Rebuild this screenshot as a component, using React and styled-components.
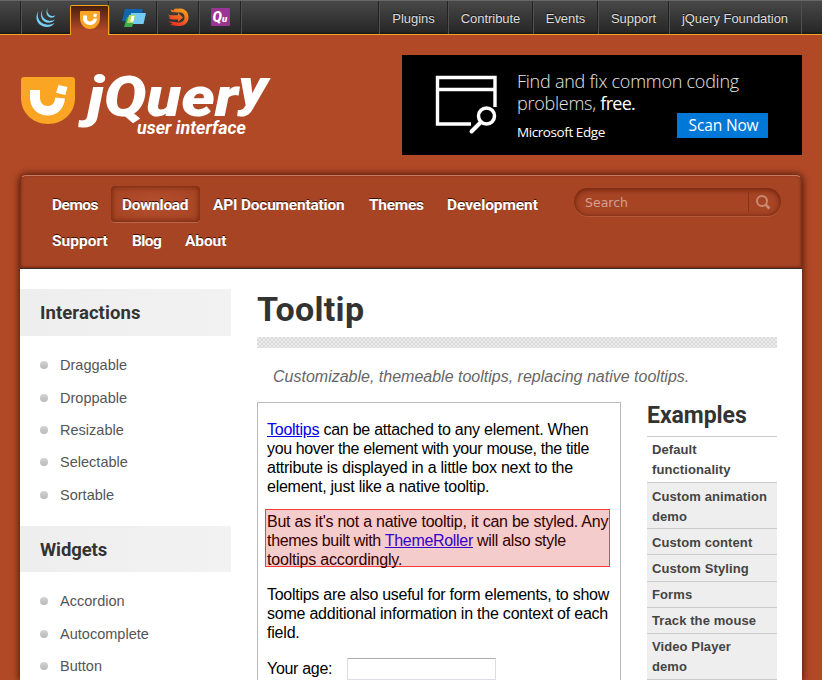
import React from 'react';
import styled, { createGlobalStyle, css } from 'styled-components';

const Global = createGlobalStyle`
  * { box-sizing: border-box; }
  html, body { margin: 0; height: 680px; overflow: hidden; background: #fff; }
  body { font-family: "Liberation Sans", Arial, sans-serif; color: #333; }
  h1, h2, h3, p, ul { margin: 0; padding: 0; font-weight: normal; }
  ul { list-style: none; }
  a { color: inherit; text-decoration: none; }
`;

const Page = styled.div`
  width: 822px;
  height: 680px;
  overflow: hidden;
  background: #b24926;
`;

const TopBar = styled.nav`
  display: flex;
  height: 35px;
  padding-left: 21px;
  border-top: 1px solid #666;
  border-bottom: 1px solid #f9a020;
  background: linear-gradient(#484848, #282828 92%, #161616);
`;

const divider = css`
  border-left: 1px solid #505050;
  box-shadow: -1px 0 0 #222;
`;

const Project = styled.a`
  ${divider}
  width: ${(p) => p.$w}px;
  height: 33px;
  display: flex;
  justify-content: center;
  align-items: flex-start;
`;

const ActiveProject = styled.a`
  width: 39px;
  height: 30px;
  margin-top: 4px;
  display: flex;
  justify-content: center;
  border: 1px solid #f9a020;
  border-bottom: 0;
  border-radius: 2px 2px 0 0;
  background: linear-gradient(#4a2010, #b24926 85%);
  z-index: 1;
`;

const TopLinks = styled.div`
  display: flex;
  margin-left: auto;
  margin-right: 21px;
  box-shadow: 1px 0 0 #505050;
`;

const TopLink = styled.a`
  ${divider}
  width: ${(p) => p.$w}px;
  height: 33px;
  padding-right: 1px;
  line-height: 35px;
  text-align: center;
  font-size: 13px;
  letter-spacing: -0.05px;
  white-space: nowrap;
  color: #ddd;
  text-shadow: 0 -1px 1px #111;
`;

const Header = styled.header`
  display: flex;
  justify-content: space-between;
  height: 120px;
  padding: 20px 20px 0;
`;

const Ad = styled.a`
  display: flex;
  width: 400px;
  height: 100px;
  background: #000;
  color: #fff;
  font-family: "Open Sans", sans-serif;
  white-space: nowrap;
`;

const AdIcon = styled.svg`
  flex: none;
  margin: 20px 0 0 33px;
`;

const AdBody = styled.div`
  display: grid;
  grid-template-columns: 160px 91px;
  grid-template-rows: 22px 22px 25px;
  padding: 15px 0 0 19px;
`;

const AdLine = styled.div`
  grid-column: 1 / 3;
  font-weight: 300;
  font-size: 18px;
  line-height: 22px;
  letter-spacing: -0.25px;
  color: #e6e6e6;
  b { font-weight: 400; color: #fff; letter-spacing: -0.7px; }
`;

const AdBrand = styled.div`
  font-size: 13.5px;
  line-height: 37px;
  letter-spacing: -0.42px;
`;

const AdButton = styled.div`
  height: 25px;
  margin-top: -1px;
  padding-left: 2px;
  background: #0078d7;
  text-align: center;
  font-size: 15.5px;
  line-height: 24px;
  letter-spacing: -0.15px;
`;

const Shell = styled.div`
  width: 782px;
  margin: 20px 20px 0;
  border-radius: 6px 6px 0 0;
  box-shadow: 0 0 7px 1px rgba(40, 8, 0, 0.75);
`;

const NavPanel = styled.div`
  display: flex;
  justify-content: space-between;
  height: 94px;
  padding: 10px 20px 0 20px;
  border: 1px solid #7c301a;
  border-top-color: #cb7a5e;
  border-bottom: 1px solid #3b2a26;
  border-radius: 6px 6px 0 0;
  background: #a74424;
  box-shadow: inset 0 -1px 3px rgba(60, 10, 0, 0.5);
`;

const NavList = styled.ul`
  display: flex;
  flex-wrap: wrap;
  gap: 0 2px;
  width: 515px;
  align-content: flex-start;
`;

const NavItem = styled.li`
  width: ${(p) => p.$w}px;
  height: 36px;
  padding-left: 11px;
  border-radius: 4px;
  font: bold 15.5px/39px Roboto, sans-serif;
  letter-spacing: ${(p) => p.$ls}px;
  white-space: nowrap;
  color: #fff;
  text-shadow: 0 -1px 0 #3a1005;
  ${(p) => p.$active && css`
    background: radial-gradient(ellipse at center, #b4502f, #a74424 80%);
    box-shadow: inset 0 0 5px 1px rgba(80, 20, 0, 0.6), 0 1px 0 #b8674b;
  `}
`;

const SearchBox = styled.form`
  display: flex;
  align-items: center;
  width: 207px;
  height: 28px;
  margin-top: 2px;
  padding-left: 11px;
  border-radius: 14px;
  background: #a74424;
  box-shadow: inset 0 1px 5px 1px rgba(80, 20, 0, 0.65), 0 1px 0 #b35a3c;
`;

const SearchText = styled.span`
  width: 164px;
  height: 20px;
  border-right: 1px solid #87341b;
  font: 12.5px/22px "DejaVu Sans", sans-serif;
  color: #d3a292;
`;

const SearchIcon = styled.svg`
  margin-left: 5px;
`;

const Content = styled.div`
  display: grid;
  grid-template-columns: 211px 520px;
  column-gap: 26px;
  height: 411px;
  overflow: hidden;
  background: #fff;
`;

const Sidebar = styled.aside`
  padding-top: 20px;
`;

const SideHeading = styled.h3`
  height: ${(p) => p.$h}px;
  padding-left: 20px;
  background: linear-gradient(90deg, #eee, #f2f2f2);
  font: bold 18.5px/48px Roboto, sans-serif;
  letter-spacing: ${(p) => p.$ls}px;
  color: #333;
`;

const SideList = styled.ul`
  padding: 13px 0 15px 20px;
`;

const SideItem = styled.li`
  display: flex;
  align-items: center;
  gap: 12px;
  height: 32.4px;
  font-size: 14.5px;
  letter-spacing: 0.02px;
  color: #555;
  &::before {
    content: "";
    width: 8px;
    height: 8px;
    border-radius: 50%;
    background: linear-gradient(#d4d4d4, #b8b8b8);
  }
`;

const Main = styled.main`
  padding-top: 20px;
`;

const Title = styled.h1`
  height: 48px;
  font: bold 34px/40px Roboto, sans-serif;
  letter-spacing: 0.3px;
  color: #333;
`;

const Stripe = styled.div`
  height: 11px;
  background: repeating-conic-gradient(#dadada 0 25%, #ececec 0 50%) 0 0 / 4px 4px;
`;

const Intro = styled.p`
  height: 54px;
  padding-left: 16px;
  font: italic 16px/57px "Liberation Sans", Arial, sans-serif;
  color: #666;
  white-space: nowrap;
`;

const Columns = styled.div`
  display: grid;
  grid-template-columns: 364px 130px;
  column-gap: 26px;
`;

const Demo = styled.section`
  height: 300px;
  padding: 17px 0 0 9px;
  border: 1px solid #bbb;
  font-size: 16px;
  line-height: 19px;
  color: #000;
  white-space: nowrap;
`;

const Para = styled.p`
  margin-bottom: 16px;
`;

const Highlight = styled(Para)`
  width: 345px;
  height: 58px;
  margin: -3px 0 18px -2px;
  padding: 2px 0 0 1px;
  border: 1px solid #ff3b3b;
  background: #f5cccc;
  color: #330000;
`;

const Line = styled.span`
  display: block;
  letter-spacing: ${(p) => p.$ls}px;
`;

const DemoLink = styled.a`
  color: ${(p) => (p.$tinted ? '#3300cc' : '#0000ee')};
  text-decoration: underline;
`;

const Field = styled.label`
  display: flex;
  gap: 15px;
  line-height: 21px;
  letter-spacing: -0.3px;
`;

const Input = styled.input`
  width: 149px;
  height: 22px;
  border: 1px solid #dcdcea;
  border-top-color: #aaadb3;
  border-radius: 1px;
  background: #fff;
`;

const Examples = styled.aside`
  white-space: nowrap;
`;

const ExamplesHeading = styled.h2`
  height: 34px;
  font: bold 23px/27px Roboto, sans-serif;
  letter-spacing: -0.05px;
  color: #333;
`;

const Example = styled.a`
  display: block;
  height: ${(p) => p.$h}px;
  padding: ${(p) => p.$top || 3}px 0 0 5px;
  border-top: 1px solid #ccc;
  background: ${(p) => (p.$active ? '#fff' : '#eee')};
  font-weight: bold;
  font-size: 13px;
  line-height: 20px;
  letter-spacing: 0.1px;
  color: #444;
`;

const LogoText = styled.text`
  font-family: Roboto, sans-serif;
  font-weight: ${(p) => p.$weight};
  font-style: italic;
  font-size: ${(p) => p.$size}px;
  fill: #fff;
`;

const LogoTail = styled.tspan`
  font-size: 52px;
`;

const Logo = () => (
  <svg width="262" height="95" viewBox="20 55 262 95">
    <path d="M24 77h48q3 0 3 3v18c0 15-12 26-27 26S21 113 21 98V80q0-3 3-3z" fill="#faa523" />
    <path d="M30 90h10v7.500c0 5 3 8.500 8 8.500 4 0 7-3.500 7.300-8.500l9.700 1C64 109 57 115.500 48 115.500c-10 0-18-7-18-18z" fill="#fff" />
    <path d="M58.500 85l9 2-2.200 8-9.200-2.300z" fill="#fff" />
    <LogoText $weight={900} $size={56} x="87" y="116" textLength="181" lengthAdjust="spacingAndGlyphs">
      jQuer<LogoTail dy="-11">y</LogoTail>
    </LogoText>
    <LogoText $weight={700} $size={18} x="137" y="134" textLength="109" lengthAdjust="spacingAndGlyphs">user interface</LogoText>
  </svg>
);

const JQueryIcon = () => (
  <svg width="20" height="20" viewBox="0 0 20 20" fill="#79cef4">
    <path d="M2.500 3C-2 10 1 18.500 11 19q5 0 7.500-4-3 2-7 1.800C4 16 0 10 2.500 3z" />
    <path d="M6.500 1.500C3 8 6 14.500 12.500 14.800q4.500 0 6.500-3.600-2.500 2-6 1.600C8 12 4.500 8 6.500 1.500z" />
    <path d="M11.500 0c-2.500 5 0 9.500 4 9.800q2.500 0 4-2.600-1.500 1-3.500.8C12.500 7.500 10.500 4 11.500 0z" />
  </svg>
);

const UiIcon = () => (
  <svg width="20" height="19" viewBox="0 0 20 19">
    <path d="M1 0h18q1 0 1 1v6c0 6-4 11-10 11S0 13 0 7V1q0-1 1-1z" fill="#faa523" />
    <path d="M3 4.500h4v3c0 2 1 3 3 3s3-1 3.500-3H17c-.5 4-3 6.500-7 6.500s-7-3-7-6.500z" fill="#fff" />
    <path d="M14 2.500l3 .8-.8 3-3-.8z" fill="#fff" />
  </svg>
);

const MobileIcon = () => (
  <svg width="26" height="19" viewBox="0 0 26 19">
    <path d="M4 0h18l-3 12H1z" fill="#0f65af" />
    <path d="M10 4h15l-2.500 11H8z" fill="#74cbf3" />
    <path d="M6 8h8l-3 10H3z" fill="#3eae49" />
    <path d="M8 6h6.500l-2 8H6z" fill="#b0db62" />
    <path d="M10.500 7h3l-1.200 5.500h-3z" fill="#fff" />
  </svg>
);

const SizzleIcon = () => (
  <svg width="21" height="19" viewBox="0 0 21 19">
    <defs>
      <linearGradient id="flame" gradientUnits="userSpaceOnUse" x1="16" y1="0" x2="6" y2="19">
        <stop offset="0" stopColor="#faa61a" />
        <stop offset="1" stopColor="#ee2524" />
      </linearGradient>
    </defs>
    <path d="M2.500 1.500l3 1 1-1.800 6-.2C18 1 20.500 5 20.500 9.500S17 18 12 18c-3 0-7-.5-10-1.500l2.500-.7-4-2.300 6.500.5c5 1.500 9.500 0 9.500-4.500S14 4 9 4.500L3.500 4z" fill="url(#flame)" />
    <path d="M0 6.500l3 .8h7V5l5 4.500-5 4.500v-2.500H5l-4.500-.7 2-.8-2-1 1.500-.8z" fill="url(#flame)" />
  </svg>
);

const QUnitMark = styled.text`
  font: italic 900 ${(p) => p.$size}px Roboto, sans-serif;
  fill: #fff;
`;

const QUnitIcon = () => (
  <svg width="19" height="18" viewBox="0 0 19 18">
    <rect width="19" height="18" rx="1" fill="#9c3493" />
    <QUnitMark $size={14} x="1.500" y="13.500">Q<QUnitMark as="tspan" $size={9.5}>u</QUnitMark></QUnitMark>
  </svg>
);

const IconSlot = styled.span`
  display: flex;
  margin-top: ${(p) => p.$top}px;
`;

const topLinks = [['Plugins', 69], ['Contribute', 85], ['Events', 65], ['Support', 71], ['jQuery Foundation', 132]];
const navItems = [
  ['Demos', 68, -0.5], ['Download', 89, -0.32, true], ['API Documentation', 154, -0.22], ['Themes', 76, -0.3],
  ['Development', 113, -0.08], ['Support', 78, 0.02], ['Blog', 51, -0.6], ['About', 64, -0.1],
];
const interactions = ['Draggable', 'Droppable', 'Resizable', 'Selectable', 'Sortable'];
const widgets = ['Accordion', 'Autocomplete', 'Button'];
const examples = [
  { lines: ['Default', 'functionality'], h: 46, active: true },
  { lines: ['Custom animation', 'demo'], h: 46, top: 4 },
  { lines: ['Custom content'], h: 26, top: 4 },
  { lines: ['Custom Styling'], h: 27, top: 4 },
  { lines: ['Forms'], h: 26 },
  { lines: ['Track the mouse'], h: 26 },
  { lines: ['Video Player', 'demo'], h: 46 },
  { lines: [], h: 26 },
];

export default function App() {
  return (
    <>
      <Global />
      <Page>
        <TopBar>
          <Project $w={49}><IconSlot $top={7}><JQueryIcon /></IconSlot></Project>
          <ActiveProject><IconSlot $top={5}><UiIcon /></IconSlot></ActiveProject>
          <Project $w={48}><IconSlot $top={8}><MobileIcon /></IconSlot></Project>
          <Project $w={42}><IconSlot $top={7}><SizzleIcon /></IconSlot></Project>
          <Project $w={42}><IconSlot $top={7}><QUnitIcon /></IconSlot></Project>
          <Project $w={1} />
          <TopLinks>
            {topLinks.map(([label, w]) => <TopLink key={label} $w={w}>{label}</TopLink>)}
          </TopLinks>
        </TopBar>
        <Header>
          <Logo />
          <Ad>
            <AdIcon width="63" height="60" viewBox="435 75 63 60" fill="none" stroke="#fff">
              <path d="M495 107V77.500H437.500v46.500H471M437 89.500h58" strokeWidth="3.400" />
              <circle cx="486.500" cy="116" r="8" strokeWidth="3.500" />
              <path d="M481 122l-9.500 9.500" strokeWidth="4" strokeLinecap="round" />
            </AdIcon>
            <AdBody>
              <AdLine>Find and fix common coding</AdLine>
              <AdLine>problems, <b>free.</b></AdLine>
              <AdBrand>Microsoft Edge</AdBrand>
              <AdButton>Scan Now</AdButton>
            </AdBody>
          </Ad>
        </Header>
        <Shell>
          <NavPanel>
            <NavList>
              {navItems.map(([label, w, ls, active]) => (
                <NavItem key={label} $w={w} $ls={ls} $active={active}>{label}</NavItem>
              ))}
            </NavList>
            <SearchBox>
              <SearchText>Search</SearchText>
              <SearchIcon width="18" height="18" viewBox="0 0 18 18" fill="none" stroke="#cc8872" strokeWidth="2">
                <circle cx="8" cy="8" r="5" />
                <path d="M11.500 11.500l4 4" strokeWidth="2.600" />
              </SearchIcon>
            </SearchBox>
          </NavPanel>
          <Content>
            <Sidebar>
              <SideHeading $h={47} $ls={0.08}>Interactions</SideHeading>
              <SideList>{interactions.map((t) => <SideItem key={t}>{t}</SideItem>)}</SideList>
              <SideHeading $h={46} $ls={-0.1}>Widgets</SideHeading>
              <SideList>{widgets.map((t) => <SideItem key={t}>{t}</SideItem>)}</SideList>
            </Sidebar>
            <Main>
              <Title>Tooltip</Title>
              <Stripe />
              <Intro>Customizable, themeable tooltips, replacing native tooltips.</Intro>
              <Columns>
                <Demo>
                  <Para>
                    <Line $ls={-0.25}><DemoLink>Tooltips</DemoLink> can be attached to any element. When</Line>
                    <Line $ls={-0.37}>you hover the element with your mouse, the title</Line>
                    <Line $ls={-0.25}>attribute is displayed in a little box next to the</Line>
                    <Line $ls={-0.25}>element, just like a native tooltip.</Line>
                  </Para>
                  <Highlight>
                    <Line $ls={-0.24}>But as it's not a native tooltip, it can be styled. Any</Line>
                    <Line $ls={-0.31}>themes built with <DemoLink $tinted>ThemeRoller</DemoLink> will also style</Line>
                    <Line $ls={-0.2}>tooltips accordingly.</Line>
                  </Highlight>
                  <Para>
                    <Line $ls={-0.27}>Tooltips are also useful for form elements, to show</Line>
                    <Line $ls={-0.224}>some additional information in the context of each</Line>
                    <Line $ls={-0.2}>field.</Line>
                  </Para>
                  <Field>Your age: <Input /></Field>
                </Demo>
                <Examples>
                  <ExamplesHeading>Examples</ExamplesHeading>
                  {examples.map(({ lines, h, top, active }, i) => (
                    <Example key={i} $h={h} $top={top} $active={active}>
                      {lines.map((l) => <div key={l}>{l}</div>)}
                    </Example>
                  ))}
                </Examples>
              </Columns>
            </Main>
          </Content>
        </Shell>
      </Page>
    </>
  );
}
